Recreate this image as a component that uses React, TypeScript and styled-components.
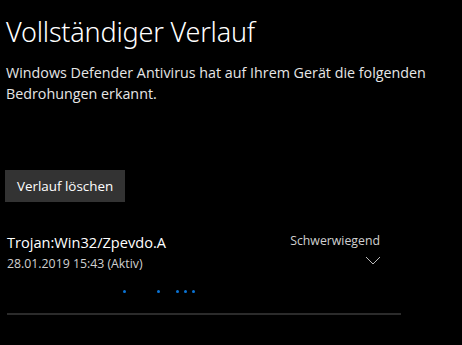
import React from "react";
import styled, { createGlobalStyle } from "styled-components";

const Global = createGlobalStyle`
  html, body { margin: 0; padding: 0; background: #000; }
  body { font-family: "Open Sans", "Noto Sans", sans-serif; color: #fff; }
`;

const Page = styled.div`
  width: 462px;
  height: 345px;
  background: #000;
  padding: 14px 0 0 6px;
  box-sizing: border-box;
  display: flex;
  flex-direction: column;
`;

const Title = styled.h1`
  margin: 0;
  font-family: "Noto Sans", "Open Sans", sans-serif;
  font-weight: 300;
  font-size: 27px;
  line-height: 36px;
  letter-spacing: -0.2px;
  color: #fff;
`;

const Lead = styled.p`
  margin: 12px 0 0 0;
  font-size: 14.3px;
  line-height: 21px;
  color: #e6e6e6;
  width: 440px;
`;

const Button = styled.button`
  margin: 66px 0 0 -1px;
  align-self: flex-start;
  height: 32px;
  padding: 0 12px;
  background: #333;
  border: none;
  color: #fff;
  font-family: "Open Sans", "Noto Sans", sans-serif;
  font-size: 13.4px;
  line-height: 32px;
`;

const Item = styled.div`
  margin-top: 30px;
  width: 395px;
  display: flex;
  flex-direction: column;
`;

const Row = styled.div`
  display: flex;
  justify-content: space-between;
  align-items: flex-start;
`;

const Left = styled.div`
  display: flex;
  flex-direction: column;
  padding-left: 1px;
`;

const Name = styled.div`
  font-size: 14.6px;
  line-height: 20px;
  color: #fff;
`;

const DateText = styled.div`
  margin-top: 3px;
  font-size: 12.3px;
  line-height: 18px;
  color: #d0d0d0;
`;

const Right = styled.div`
  display: flex;
  flex-direction: column;
  align-items: flex-end;
  width: 100px;
  padding-right: 20px;
  padding-top: 1px;
`;

const Severity = styled.div`
  font-size: 12.3px;
  line-height: 16px;
  color: #d0d0d0;
  margin-right: 1px;
`;

const Chevron = styled.svg`
  margin-top: 7px;
`;

const Dots = styled.div`
  position: relative;
  height: 20px;
  margin-top: 9px;
`;

const Dot = styled.span`
  position: absolute;
  top: 8px;
  width: 3px;
  height: 3px;
  border-radius: 50%;
  background: #0a74d6;
`;

const Divider = styled.div`
  margin: 11px 0 0 1px;
  width: 394px;
  height: 2px;
  background: #2b2b2b;
`;

export default function App() {
  const dots = [117, 151, 170, 178, 186];
  return (
    <>
      <Global />
      <Page>
        <Title>Vollständiger Verlauf</Title>
        <Lead>
          Windows Defender Antivirus hat auf Ihrem Gerät die folgenden Bedrohungen erkannt.
        </Lead>
        <Button>Verlauf löschen</Button>
        <Item>
          <Row>
            <Left>
              <Name>Trojan:Win32/Zpevdo.A</Name>
              <DateText>28.01.2019 15:43 (Aktiv)</DateText>
            </Left>
            <Right>
              <Severity>Schwerwiegend</Severity>
              <Chevron width="16" height="9" viewBox="0 0 16 9">
                <path d="M1 1 L8 8 L15 1" fill="none" stroke="#bbb" strokeWidth="1" />
              </Chevron>
            </Right>
          </Row>
          <Dots>
            {dots.map((x, i) => (
              <Dot key={i} style={{ left: x }} />
            ))}
          </Dots>
          <Divider />
        </Item>
      </Page>
    </>
  );
}
